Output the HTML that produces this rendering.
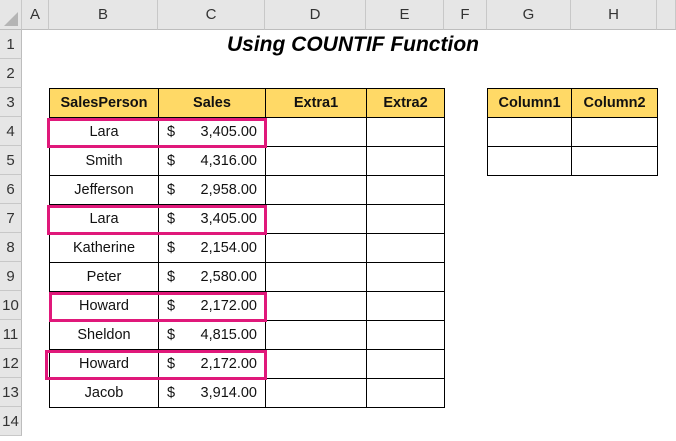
<!DOCTYPE html>
<html><head><style>
body{margin:0;width:676px;height:441px;overflow:hidden;background:#fff;font-family:"Liberation Sans",Calibri,sans-serif;position:relative}
.a{position:absolute;box-sizing:border-box}
.ch{top:0;height:30px;background:#e6e6e6;border-right:1px solid #c8c8c8;border-bottom:1px solid #bdbdbd;text-align:center;line-height:30px;font-size:15px;color:#333}
.rh{left:0;width:22px;background:#e6e6e6;border-bottom:1px solid #c8c8c8;border-right:1px solid #bdbdbd;text-align:center;line-height:29px;font-size:15px;color:#333}
.c{border:1px solid #000;margin:0;height:30px;line-height:28px;font-size:14.5px;text-align:center;color:#111}
.h{background:#ffd966;font-weight:bold}
.pk{border:3px solid #e0187a}
</style></head><body>
<div class="a ch" style="left:0;width:22px"></div>
<div class="a" style="left:4px;top:12px;width:0;height:0;border-left:14px solid transparent;border-bottom:14px solid #b5b5b5"></div>
<div class="a ch" style="left:22px;width:27px">A</div>
<div class="a ch" style="left:49px;width:109px">B</div>
<div class="a ch" style="left:158px;width:107px">C</div>
<div class="a ch" style="left:265px;width:101px">D</div>
<div class="a ch" style="left:366px;width:78px">E</div>
<div class="a ch" style="left:444px;width:43px">F</div>
<div class="a ch" style="left:487px;width:84px">G</div>
<div class="a ch" style="left:571px;width:86px">H</div>
<div class="a ch" style="left:657px;width:19px"></div>
<div id="rows"></div>
<div class="a" style="left:49px;top:30px;width:608px;height:29px;text-align:center;line-height:29px;font-size:21px;font-weight:bold;font-style:italic">Using COUNTIF Function</div>
<div id="t"></div>
<script>
var r='';for(var i=1;i<=14;i++){r+='<div class="a rh" style="top:'+(30+29*(i-1))+'px;height:29px">'+i+'</div>';}
document.getElementById('rows').outerHTML=r;
var names=['Lara','Smith','Jefferson','Lara','Katherine','Peter','Howard','Sheldon','Howard','Jacob'];
var sales=['3,405.00','4,316.00','2,958.00','3,405.00','2,154.00','2,580.00','2,172.00','4,815.00','2,172.00','3,914.00'];
var t='';
function cell(x,y,w,txt,cls){return '<div class="a c '+(cls||'')+'" style="left:'+x+'px;top:'+y+'px;width:'+(w+1)+'px">'+txt+'</div>';}
var y=88;
t+=cell(49,y,109,'SalesPerson','h')+cell(158,y,107,'Sales','h')+cell(265,y,101,'Extra1','h')+cell(366,y,78,'Extra2','h');
t+=cell(487,y,84,'Column1','h')+cell(571,y,86,'Column2','h');
for(var i=0;i<10;i++){y=117+29*i;
t+=cell(49,y,109,names[i])+'<div class="a c" style="left:158px;top:'+y+'px;width:108px;text-align:left;padding:0 8px"><span>$</span><span style="float:right">'+sales[i]+'</span></div>'+cell(265,y,101,'')+cell(366,y,78,'');
if(i<2)t+=cell(487,y,84,'')+cell(571,y,86,'');}
[[117,47],[204,47],[291,49],[349,45]].forEach(function(p){t+='<div class="a pk" style="left:'+p[1]+'px;top:'+(p[0]+1)+'px;width:'+(267-p[1])+'px;height:30px"></div>';});
document.getElementById('t').outerHTML=t;
</script>
</body></html>
